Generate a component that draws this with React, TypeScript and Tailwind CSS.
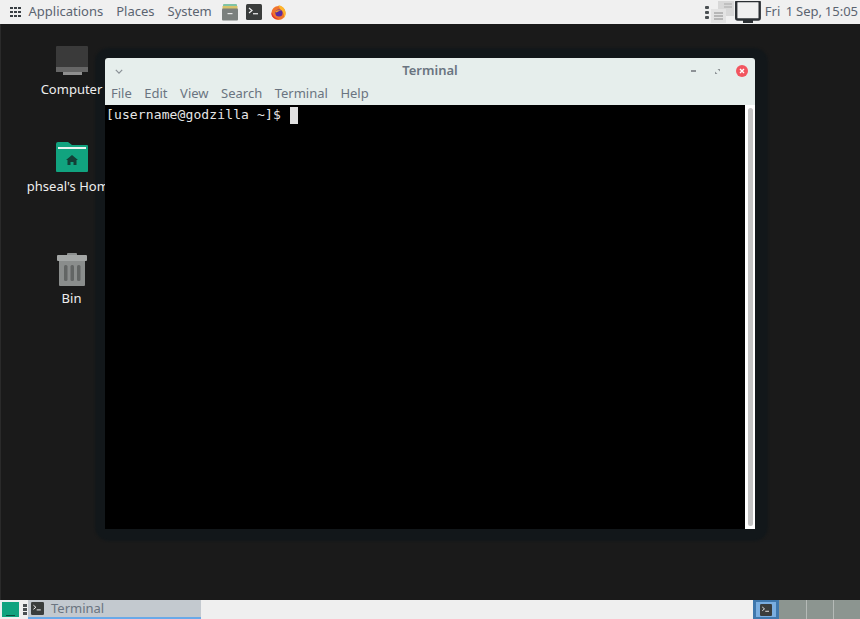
const sans = "font-['Noto_Sans',sans-serif]";

function TerminalGlyph({ className }: { className: string }) {
  return (
    <svg viewBox="0 0 16 16" className={className}>
      <rect x="0" y="0" width="16" height="16" rx="1.5" fill="#3a3d3c" />
      <path d="M3 4l3 2.5L3 9" fill="none" stroke="#f2f2f2" strokeWidth="1.2" />
      <rect x="7" y="9" width="5" height="1.4" fill="#d8d8d8" />
    </svg>
  );
}

function Firefox() {
  return (
    <svg viewBox="0 0 18 18" className="h-[17px] w-[17px]">
      <circle cx="9" cy="9.5" r="7.5" fill="#f0742c" />
      <path d="M9 1c4 1 7 3.500 7.500 8 .3 3-1 5-2 6 1-3 0-6-2.500-8C11 5.500 9.500 4 9 1z" fill="#fdb52b" />
      <circle cx="9.500" cy="9.500" r="3.800" fill="#5a2ca0" />
      <path d="M2 9c1 3 3 6 7 7-4 .5-7.500-2.500-7.500-6z" fill="#e3342f" />
      <path d="M5.500 8C7 6.500 10 6 12 7.500 10.500 7 8 7.500 7 9z" fill="#f8a02b" />
    </svg>
  );
}

function Archive() {
  return (
    <svg viewBox="0 0 16 18" className="h-[18px] w-[16px]">
      <rect x="1" y="1" width="14" height="3" rx="1" fill="#7fc4a5" />
      <rect x="0.500" y="3" width="15" height="3" fill="#d7c36b" />
      <rect x="0" y="5.500" width="16" height="12" rx="1" fill="#7b807e" />
      <rect x="5.500" y="10" width="5" height="1.200" fill="#e8e8e8" />
    </svg>
  );
}

function DotGrid() {
  return (
    <div className="grid grid-cols-3 gap-[1.500px]">
      {Array.from({ length: 9 }).map((_, i) => (
        <span key={i} className="h-[2.500px] w-[2.500px] bg-[#3a3f44]" />
      ))}
    </div>
  );
}

function Handle() {
  return (
    <div className="flex flex-col gap-[2px]">
      {[0, 1, 2].map((i) => (
        <span key={i} className="h-[3px] w-[4px] rounded-[1px] bg-[#4a4f52]" />
      ))}
    </div>
  );
}

function DesktopIcon({
  label,
  top,
  children,
}: {
  label: string;
  top: number;
  children: React.ReactNode;
}) {
  return (
    <div className="absolute left-0 flex w-[141px] flex-col items-center" style={{ top }}>
      <div className="flex h-[36px] w-[36px] items-center justify-center">{children}</div>
      <span className={`mt-[2px] text-[13px] leading-[18px] text-[#eeeeee] ${sans}`}>{label}</span>
    </div>
  );
}

export default function App() {
  const menus = ["File", "Edit", "View", "Search", "Terminal", "Help"];
  return (
    <div className={`flex h-[619px] w-[860px] flex-col overflow-hidden bg-[#1a1a1a] ${sans}`}>
      {/* top panel */}
      <header className="flex h-[24px] items-center bg-[#f0f0f0] text-[13px] text-[#5b6470]">
        <div className="ml-[10px] mr-[8px]">
          <DotGrid />
        </div>
        <span>Applications</span>
        <span className="ml-[13px]">Places</span>
        <span className="ml-[13px]">System</span>
        <div className="ml-[10px] flex items-center gap-[8px]">
          <Archive />
          <TerminalGlyph className="h-[16px] w-[16px]" />
          <Firefox />
        </div>
        <div className="ml-auto flex items-center">
          <Handle />
          <svg viewBox="0 0 26 23" className="h-[23px] w-[26px]">
            <rect x="9" y="0" width="16" height="15" fill="#d8d8d8" />
            <path d="M15 3h8M15 6h8" stroke="#a8a8a8" strokeWidth="1" />
            <rect x="2" y="8" width="15" height="14" fill="#e3e3e3" />
            <path d="M5 12h9M5 15h9M5 18h9" stroke="#8a8a8a" strokeWidth="1" />
          </svg>
          <svg viewBox="0 0 26 23" className="h-[23px] w-[26px]">
            <rect x="1.200" y="0" width="23.500" height="18.500" rx="1.500" fill="#f0f0f0" stroke="#2b2f33" strokeWidth="2.400" />
            <rect x="8" y="19" width="10" height="3" fill="#2b2f33" />
          </svg>
          <span className="ml-[4px] mr-[2px] whitespace-pre [word-spacing:-0.6px]">Fri  1 Sep, 15:05</span>
        </div>
      </header>

      {/* desktop */}
      <main className="relative flex-1 border-l border-[#2a2a2a]">
        {/* window shadow sits under the icon labels */}
        <div className="absolute left-[94px] top-[24px] h-[493px] w-[673px] rounded-[14px] bg-[#12171a] blur-[1px]" />

        <DesktopIcon label="Computer" top={18}>
          <svg viewBox="0 0 32 29" className="h-[29px] w-[32px]">
            <rect x="0" y="0" width="32" height="23" rx="1" fill="#3a3a3a" />
            <rect x="0" y="21" width="32" height="5" fill="#666666" />
            <rect x="7" y="26" width="19" height="3" fill="#8f8f8f" />
          </svg>
        </DesktopIcon>
        <DesktopIcon label="phseal's Home" top={115}>
          <svg viewBox="0 0 32 30" className="h-[30px] w-[32px]">
            <path d="M0 2a2 2 0 012-2h10l4 3h15a1 1 0 011 1v25a1 1 0 01-1 1H1a1 1 0 01-1-1z" fill="#11a37f" />
            <rect x="2" y="5" width="28" height="2" fill="#e9f5f1" />
            <path d="M16 13l-6 5h1.500v5h3v-3h3v3h3v-5H22z" fill="#133f36" />
          </svg>
        </DesktopIcon>
        <DesktopIcon label="Bin" top={227}>
          <svg viewBox="0 0 30 33" className="h-[33px] w-[30px]">
            <rect x="10" y="0" width="10" height="3" rx="1" fill="#8c8f8e" />
            <rect x="0" y="2" width="30" height="6" rx="1" fill="#a3a6a5" />
            <path d="M2 8h26v24a1 1 0 01-1 1H3a1 1 0 01-1-1z" fill="#8a8d8c" />
            <rect x="7" y="12" width="3.500" height="16" rx="1.500" fill="#626564" />
            <rect x="13.500" y="12" width="3.500" height="16" rx="1.500" fill="#626564" />
            <rect x="20" y="12" width="3.500" height="16" rx="1.500" fill="#626564" />
          </svg>
        </DesktopIcon>

        {/* terminal window */}
        <section className="absolute left-[104px] top-[34px] z-10 flex h-[471px] w-[650px] flex-col rounded-t-[3px] bg-black">
          <div className="grid h-[25px] grid-cols-[1fr_auto_1fr] items-center rounded-t-[3px] bg-[#e6eeec] pt-[1px]">
            <svg viewBox="0 0 10 6" className="ml-[10px] h-[5px] w-[8px]">
              <path d="M1 1l4 4 4-4" fill="none" stroke="#8a9096" strokeWidth="1.500" />
            </svg>
            <span className="text-[13px] font-semibold text-[#6a7480]">Terminal</span>
            <div className="mr-[7px] flex items-center justify-end">
              <span className="h-[2px] w-[5px] bg-[#8d9296]" />
              <svg viewBox="0 0 6 6" className="ml-[19px] h-[5px] w-[5px]">
                <path d="M0 6V3l3 3zM6 0v3L3 0z" fill="#8d9296" />
              </svg>
              <span className="ml-[16px] flex h-[12px] w-[12px] items-center justify-center rounded-full bg-[#f2555f]">
                <svg viewBox="0 0 6 6" className="h-[6px] w-[6px]">
                  <path d="M1 1l4 4M5 1L1 5" stroke="#ffffff" strokeWidth="1.400" />
                </svg>
              </span>
            </div>
          </div>
          <nav className="flex h-[22px] items-center gap-[12.500px] bg-[#e6eeec] pl-[6px] text-[13px] text-[#6a7480]">
            {menus.map((m) => (
              <span key={m}>{m}</span>
            ))}
          </nav>
          <div className="flex min-h-0 flex-1">
            <div className="flex-1 pl-[1px] pt-[1px] font-['DejaVu_Sans_Mono',monospace] text-[13px] leading-[18px] tracking-[0.12px] text-[#e6e6e6]">
              <span className="whitespace-pre">[username@godzilla ~]$ </span>
              <span className="ml-[1px] mt-[1px] inline-block h-[17px] w-[8px] bg-[#e0e0e0] align-top" />
            </div>
            <div className="w-[10px] bg-white pb-[3px] pl-[3px] pr-[2px] pt-[3px]">
              <div className="h-full rounded-full bg-[#c4c4c4]" />
            </div>
          </div>
        </section>
      </main>

      {/* bottom panel */}
      <footer className="flex h-[19px] items-stretch bg-[#efefef] text-[13px] text-[#6a7480]">
        <div className="ml-[2px] mt-[2px] mb-[2px] flex w-[17px] items-end justify-center bg-[#11a37f] pb-[1px]">
          <span className="h-[1px] w-[9px] bg-[#0b4d3e]" />
        </div>
        <div className="ml-[4px] mr-[1px] flex items-center">
          <div className="flex flex-col gap-[1px]">
            <span className="h-[3px] w-[4px] bg-[#4a4f52]" />
            <span className="h-[3px] w-[4px] bg-[#4a4f52]" />
            <span className="h-[3px] w-[4px] bg-[#4a4f52]" />
          </div>
        </div>
        <div className="flex w-[173px] items-center border-b-[2px] border-[#6aa9e8] bg-[#c3c9cf] pl-[3px]">
          <TerminalGlyph className="h-[13px] w-[13px]" />
          <span className="ml-[7px]">Terminal</span>
        </div>
        <div className="ml-auto flex">
          <div className="flex w-[26px] items-center justify-center bg-[#3f78ad]">
            <div className="flex h-[15px] w-[20px] items-center justify-center bg-[#7aaee0]">
              <TerminalGlyph className="h-[12px] w-[14px]" />
            </div>
          </div>
          <div className="w-[27px] bg-[#8c9590]" />
          <div className="w-[27px] border-l border-[#b5bab7] bg-[#8c9590]" />
          <div className="w-[27px] border-l border-[#b5bab7] bg-[#8c9590]" />
        </div>
      </footer>
    </div>
  );
}
